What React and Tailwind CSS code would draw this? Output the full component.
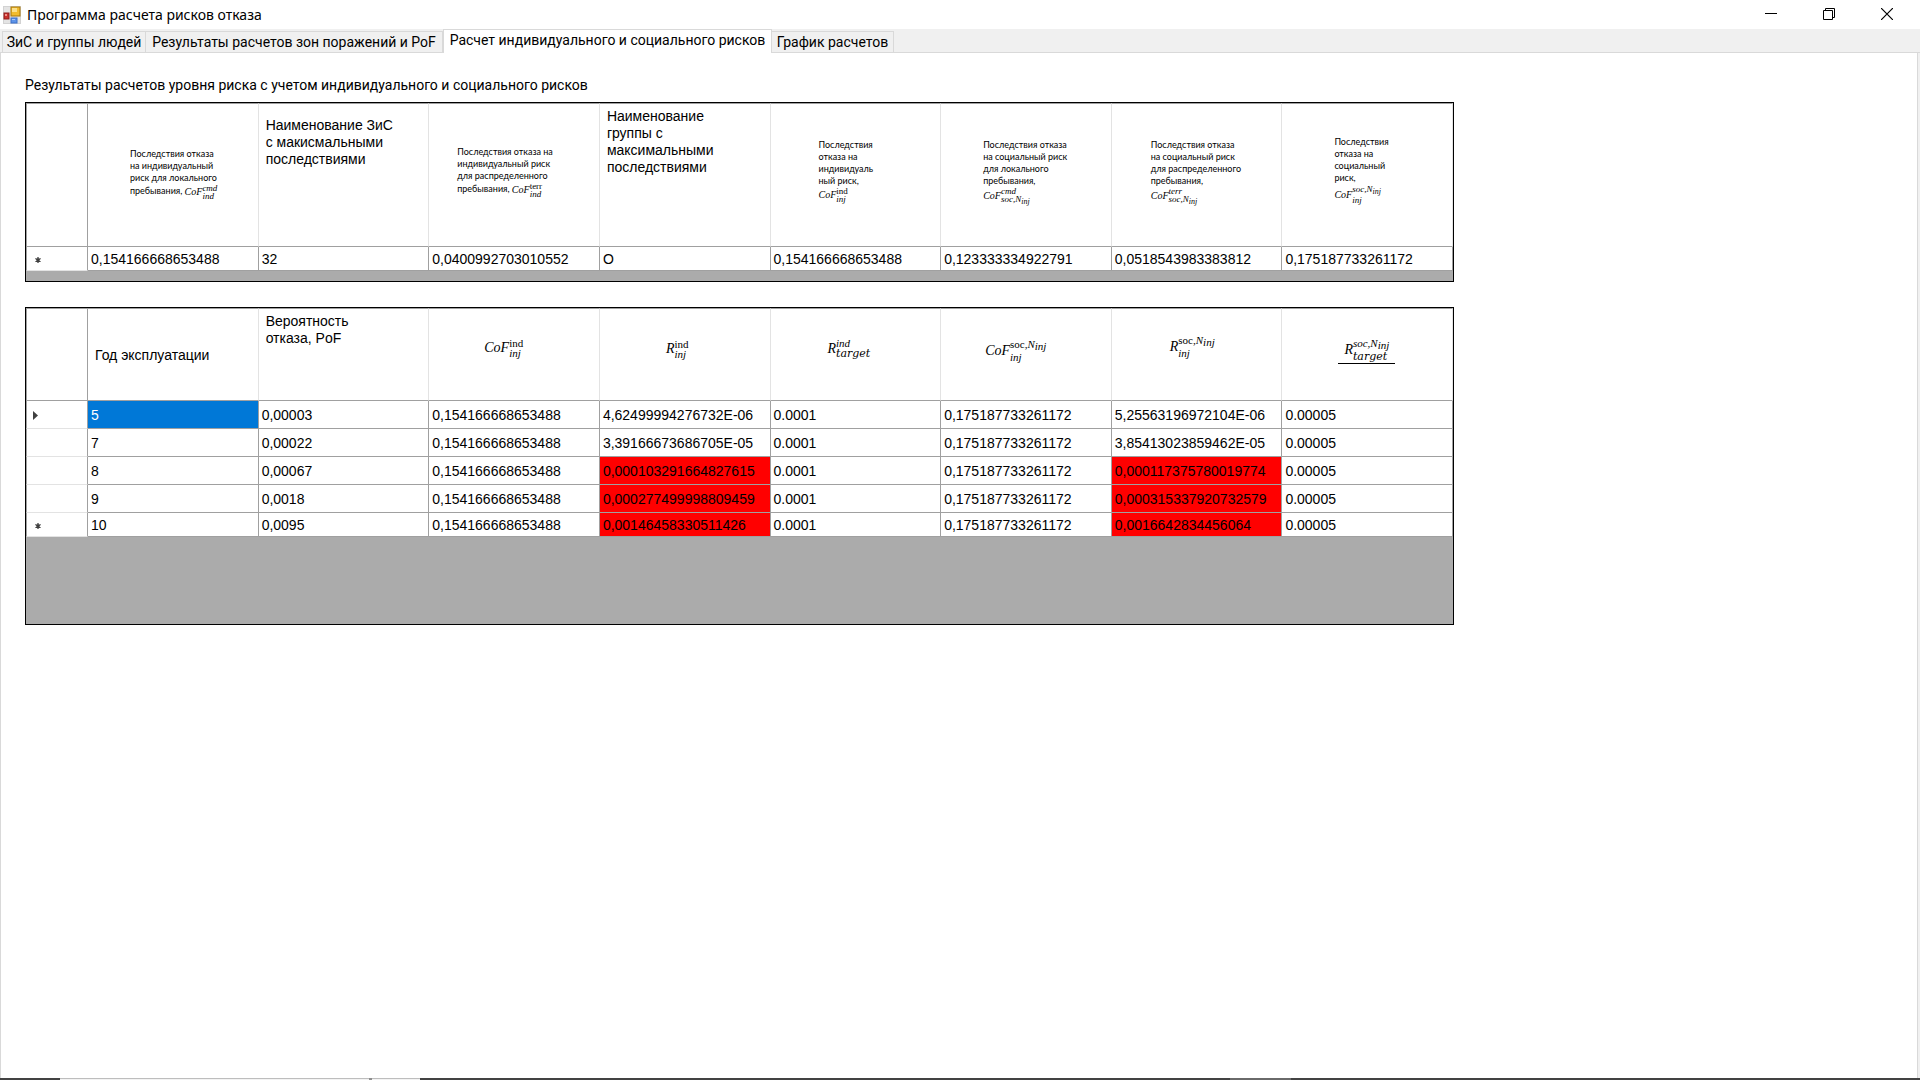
const TABS = [
  { label: "ЗиС и группы людей", width: "w-[144px]" },
  { label: "Результаты расчетов зон поражений и PoF", width: "w-[297px]" },
  { label: "Расчет индивидуального и социального рисков", width: "w-[329px]", active: true },
  { label: "График расчетов", width: "w-[122px]" },
];

function AppIcon() {
  return (
    <svg className="h-[18px] w-[18px]" viewBox="0 0 18 18" aria-hidden="true">
      <rect x="0.5" y="0.5" width="17" height="17" fill="#e4e4e4" stroke="#d2d2d2" />
      <rect x="1" y="7" width="5" height="6" fill="#c9302c" stroke="#8f1d1b" />
      <rect x="2" y="8" width="2" height="2" fill="#ef8f87" />
      <rect x="8" y="1" width="9" height="9" fill="#f2bc2e" stroke="#a87708" />
      <rect x="9" y="2" width="5" height="4" fill="#fbe08a" />
      <rect x="8" y="12" width="6" height="5" fill="#5d93e8" stroke="#3b6fc9" />
      <rect x="9" y="13" width="3" height="1" fill="#a9c8f8" />
    </svg>
  );
}

function TitleBar() {
  const button = "flex h-[29px] w-[58px] items-center justify-center pb-[2px]";
  return (
    <header className="flex h-[29px] shrink-0 items-center bg-white pl-[3px] pr-1">
      <AppIcon />
      <h1 className="ml-[6px] flex-1 font-['Noto_Sans',sans-serif] text-[14px] leading-[20px]">
        Программа расчета рисков отказа
      </h1>
      <button type="button" aria-label="Свернуть" className={button}>
        <svg className="h-3 w-3" viewBox="0 0 12 12"><path d="M0 5.5h12" stroke="#000" /></svg>
      </button>
      <button type="button" aria-label="Восстановить" className={button}>
        <svg className="h-3 w-3" viewBox="0 0 12 12" fill="none" stroke="#000">
          <path d="M0.5 2.5h9v9h-9zM2.5 2.5v-2h9v9h-2" />
        </svg>
      </button>
      <button type="button" aria-label="Закрыть" className={button}>
        <svg className="h-3 w-3" viewBox="0 0 12 12"><path d="M0 0l12 12M12 0l-12 12" stroke="#000" strokeWidth="1.2" /></svg>
      </button>
    </header>
  );
}

function TabStrip() {
  return (
    <div role="tablist" className="flex h-6 shrink-0 items-end border-b border-[#d9d9d9] bg-[#f0f0f0] pl-[2px]">
      {TABS.map((t, i) => (
        <button
          key={t.label}
          type="button"
          role="tab"
          aria-selected={!!t.active}
          className={
            t.active
              ? `${t.width} -mb-px h-6 border-x border-t border-[#d9d9d9] bg-white pb-[3px] text-center whitespace-nowrap`
              : `${t.width} h-[21px] border-t border-r border-[#d9d9d9] text-center whitespace-nowrap ${i === 0 ? "border-l" : ""}`
          }
        >
          {t.label}
        </button>
      ))}
    </div>
  );
}

/* Symbol with stacked upper and lower indices. */
function Formula({ base, sup, sub, small, tall }) {
  const lead = small ? (tall ? "leading-[10px]" : "leading-[8px]") : tall ? "leading-[13px]" : "leading-[10px]";
  return (
    <span className={`inline-flex items-center align-middle font-['Liberation_Serif',serif] whitespace-nowrap italic ${small ? "text-[10px] leading-[14px]" : "text-[14px] leading-[16px]"}`}>
      <span>{base}</span>
      <span className={`flex flex-col ${lead} ${small ? "text-[9px]" : "text-[11px]"}`}>
        <span>{sup}</span>
        <span>{sub}</span>
      </span>
    </span>
  );
}

function SocN({ roman, small }) {
  return (
    <>
      <span className={roman ? "not-italic" : ""}>soc,</span>N
      <span className={small ? "relative top-[2px] text-[8px]" : "relative top-[2px] text-[11px]"}>inj</span>
    </>
  );
}

const ind = <span className="not-italic">ind</span>;
const target = <span className="font-['DejaVu_Serif',serif]">target</span>;

function Note({ lines, children }) {
  return (
    <div className="font-['Lato',sans-serif] text-[9px] leading-[12px] whitespace-nowrap">
      {lines.map((l) => <div key={l}>{l}</div>)}
      {children}
    </div>
  );
}

const CONSEQUENCES_HEAD = [
  { pad: "pt-[44px] pl-[42px]", body: (
    <Note lines={["Последствия отказа", "на индивидуальный", "риск для локального"]}>
      пребывания, <Formula small base="CoF" sup="cmd" sub="ind" />
    </Note>) },
  { pad: "pt-[13px] pl-[7px]", body: <>Наименование ЗиС<br />с макисмальными<br />последствиями</> },
  { pad: "pt-[42px] pl-[28px]", body: (
    <Note lines={["Последствия отказа на", "индивидуальный риск", "для распределенного"]}>
      пребывания, <Formula small base="CoF" sup={<span className="not-italic">terr</span>} sub="ind" />
    </Note>) },
  { pad: "pt-[4px] pl-[7px]", body: <>Наименование<br />группы с<br />максимальными<br />последствиями</> },
  { pad: "pt-[35px] pl-[48px]", body: (
    <Note lines={["Последствия", "отказа на", "индивидуаль", "ный риск,"]}>
      <Formula small base="CoF" sup={ind} sub="inj" />
    </Note>) },
  { pad: "pt-[35px] pl-[42px]", body: (
    <Note lines={["Последствия отказа", "на социальный риск", "для локального", "пребывания,"]}>
      <Formula small base="CoF" sup="cmd" sub={<SocN small />} />
    </Note>) },
  { pad: "pt-[35px] pl-[39px]", body: (
    <Note lines={["Последствия отказа", "на социальный риск", "для распределенного", "пребывания,"]}>
      <Formula small base="CoF" sup="terr" sub={<SocN small />} />
    </Note>) },
  { pad: "pt-[32px] pl-[52px]", body: (
    <Note lines={["Последствия", "отказа на", "социальный", "риск,"]}>
      <Formula small tall base="CoF" sup={<SocN small />} sub="inj" />
    </Note>) },
];

const CONSEQUENCES_ROWS = [
  ["0,154166668653488", "32", "0,0400992703010552", "О", "0,154166668653488", "0,123333334922791", "0,0518543983383812", "0,175187733261172"],
];

const RISK_HEAD = [
  { pad: "pt-[38px] pl-[7px]", body: "Год эксплуатации" },
  { pad: "pt-[4px] pl-[7px]", body: <>Вероятность<br />отказа, PoF</> },
  { pad: "pt-[29px] pl-[55px]", body: <Formula base="CoF" sup={ind} sub="inj" /> },
  { pad: "pt-[30px] pl-[66px]", body: <Formula base="R" sup={ind} sub="inj" /> },
  { pad: "pt-[29px] pl-[57px]", body: <Formula base="R" sup="ind" sub={target} /> },
  { pad: "pt-[29px] pl-[44px]", body: <Formula tall base="CoF" sup={<SocN roman />} sub="inj" /> },
  { pad: "pt-[25px] pl-[58px]", body: <Formula tall base="R" sup={<SocN roman />} sub="inj" /> },
  { pad: "pt-[28px] pl-[56px]", body: (
    <span className="inline-flex border-b border-black px-[6px]">
      <Formula tall base="R" sup={<SocN />} sub={target} />
    </span>) },
];

const COF_IND = "0,154166668653488";
const COF_SOC = "0,175187733261172";
const RISK_ROWS = [
  ["5", "0,00003", COF_IND, "4,62499994276732E-06", "0.0001", COF_SOC, "5,25563196972104E-06", "0.00005"],
  ["7", "0,00022", COF_IND, "3,39166673686705E-05", "0.0001", COF_SOC, "3,85413023859462E-05", "0.00005"],
  ["8", "0,00067", COF_IND, "0,000103291664827615", "0.0001", COF_SOC, "0,000117375780019774", "0.00005"],
  ["9", "0,0018", COF_IND, "0,000277499998809459", "0.0001", COF_SOC, "0,000315337920732579", "0.00005"],
  ["10", "0,0095", COF_IND, "0,00146458330511426", "0.0001", COF_SOC, "0,0016642834456064", "0.00005"],
];

function RowMarker({ kind }) {
  if (kind === "current")
    return <svg className="ml-[6px] h-[9px] w-[5px]" viewBox="0 0 5 9"><path d="M0 0l5 4.5l-5 4.5z" fill="#404040" /></svg>;
  if (kind === "new")
    return (
      <svg className="ml-2 h-[6px] w-[6px]" viewBox="0 0 6 6">
        <circle cx="3" cy="3" r="1.8" fill="#404040" />
        <path d="M3 0v6M0.4 1.5l5.2 3M0.4 4.5l5.2 -3" stroke="#404040" strokeWidth="1.3" />
      </svg>
    );
  return null;
}

function DataGrid({ label, head, rows, headHeight, footer, marker, cellStyle }) {
  return (
    <div className={`w-full max-w-[1429px] border border-black bg-[#ababab] font-['Liberation_Sans',Arial,sans-serif] ${footer}`}>
      <table aria-label={label} className="w-full table-fixed border-separate border-spacing-0 text-left">
        <colgroup>
          <col className="w-[62px]" />
          {head.map((_, i) => <col key={i} />)}
        </colgroup>
        <thead>
          <tr className={headHeight}>
            <td className="border border-[#a0a0a0] bg-white" />
            {head.map((h, i) => (
              <th key={i} scope="col" className={`border-t border-r border-b border-t-[#a0a0a0] border-r-[#e3e3e3] border-b-[#a0a0a0] bg-white align-top leading-[17px] font-normal ${h.pad}`}>
                {h.body}
              </th>
            ))}
          </tr>
        </thead>
        <tbody>
          {rows.map((row, r) => (
            <tr key={r} className={r === rows.length - 1 ? "h-6" : "h-7"}>
              <td className="border-r border-b border-l border-r-[#a0a0a0] border-b-[#e3e3e3] border-l-[#a0a0a0] bg-white pt-[2px] pb-0">
                <RowMarker kind={marker(r)} />
              </td>
              {row.map((v, c) => (
                <td key={c} className={`border-r border-b border-[#a0a0a0] pt-[2px] pb-0 pl-[3px] leading-[17px] whitespace-nowrap ${cellStyle(r, c)}`}>
                  {v}
                </td>
              ))}
            </tr>
          ))}
        </tbody>
      </table>
    </div>
  );
}

function riskCellStyle(r, c) {
  if (r === 0 && c === 0) return "bg-[#0078d7] text-white";
  if (r >= 2 && (c === 3 || c === 6)) return "bg-[#ff0000]";
  return "bg-white";
}

export default function App() {
  return (
    <div className="flex h-screen flex-col overflow-hidden bg-[#f0f0f0] font-['Roboto',sans-serif] text-[14px] leading-[17px] text-black">
      <TitleBar />
      <TabStrip />
      <main className="mr-[2px] flex-1 border-x border-[#d9d9d9] bg-white pt-6 pr-6 pl-6">
        <h2 className="mb-2">Результаты расчетов уровня риска с учетом индивидуального и социального рисков</h2>
        <DataGrid
          label="Последствия отказа"
          head={CONSEQUENCES_HEAD}
          rows={CONSEQUENCES_ROWS}
          headHeight="h-36"
          footer="pb-[10px]"
          marker={() => "new"}
          cellStyle={() => "bg-white"}
        />
        <div className="mt-[25px]">
          <DataGrid
            label="Уровень риска по годам"
            head={RISK_HEAD}
            rows={RISK_ROWS}
            headHeight="h-[93px]"
            footer="pb-[87px]"
            marker={(r) => (r === 0 ? "current" : r === RISK_ROWS.length - 1 ? "new" : "")}
            cellStyle={riskCellStyle}
          />
        </div>
      </main>
      <div className="flex h-[2px] shrink-0 bg-[#434343]">
        <div className="ml-[60px] h-[2px] w-[309px] border-t border-[#bdbdbd] bg-[#f3f3f3]" />
        <div className="h-[2px] w-[3px] bg-[#8f8f8f]" />
        <div className="h-[2px] w-[48px] border-t border-[#bdbdbd] bg-[#f3f3f3]" />
        <div className="ml-[810px] h-[2px] w-[61px] bg-[#6a6a6a]" />
      </div>
    </div>
  );
}
